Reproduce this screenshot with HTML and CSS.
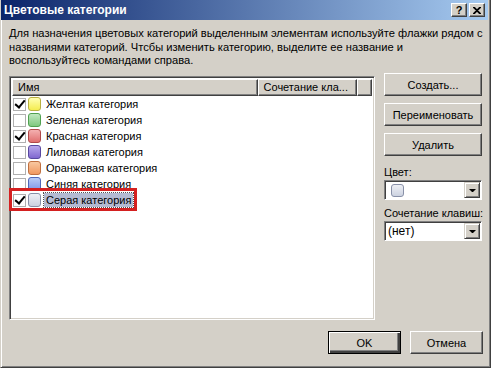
FILE: index.html
```html
<!DOCTYPE html>
<html lang="ru">
<head>
  <meta charset="UTF-8" />
  <title>Цветовые категории</title>
  <link rel="stylesheet" href="styles.css">
</head>
<body>
  <div class="window">
    <div class="titlebar">
      <span class="title">Цветовые категории</span>
      <div class="caption-btns">
        <span class="cap-btn">?</span>
        <span class="cap-btn">
          <svg width="8" height="7" viewBox="0 0 8 7"><path d="M0 0 L7 7 M1 0 L8 7 M7 0 L0 7 M8 0 L1 7" stroke="#000" stroke-width="1.2"/></svg>
        </span>
      </div>
    </div>

    <p class="desc">Для назначения цветовых категорий выделенным элементам используйте флажки рядом с<br>названиями категорий. Чтсбы изменить категорию, выделите ее название и<br>воспользуйтесь командами справа.</p>

    <div class="main">
      <div class="listbox">
        <div class="header">
          <div class="col col-name">Имя</div>
          <div class="col col-keys">Сочетание кла...</div>
          <div class="col col-fill"></div>
        </div>
        <div class="rows">
          <div class="row"><span class="check on"></span><span class="swatch yellow"></span><span class="label">Желтая категория</span></div>
          <div class="row"><span class="check"></span><span class="swatch green"></span><span class="label">Зеленая категория</span></div>
          <div class="row"><span class="check on"></span><span class="swatch red"></span><span class="label">Красная категория</span></div>
          <div class="row"><span class="check"></span><span class="swatch purple"></span><span class="label">Лиловая категория</span></div>
          <div class="row"><span class="check"></span><span class="swatch orange"></span><span class="label">Оранжевая категория</span></div>
          <div class="row"><span class="check"></span><span class="swatch blue"></span><span class="label">Синяя категория</span></div>
          <div class="row marked"><span class="check on"></span><span class="swatch gray"></span><span class="label selected">Серая категория</span><span class="red-frame"></span></div>
        </div>
      </div>

      <div class="side">
        <button class="btn">Создать...</button>
        <button class="btn">Переименовать</button>
        <button class="btn">Удалить</button>
        <div class="field-label">Цвет:</div>
        <div class="combo"><span class="swatch gray"></span><span class="drop"></span></div>
        <div class="field-label">Сочетание клавиш:</div>
        <div class="combo"><span class="combo-text">(нет)</span><span class="drop"></span></div>
      </div>
    </div>

    <div class="footer">
      <button class="btn btn-ok">OK</button>
      <button class="btn">Отмена</button>
    </div>
  </div>
</body>
</html>
```

FILE: styles.css
```css
body {
  margin: 0;
  background: #d4d0c8;
  font-family: "Liberation Sans", Arial, sans-serif;
  font-size: 11px;
  color: #000;
}
.window {
  width: 491px;
  height: 368px;
  box-sizing: border-box;
  border-left: 1px solid #d4d0c8;
  border-right: 1px solid #404040;
  border-bottom: 1px solid #404040;
  box-shadow: inset 1px 0 #fff, inset -1px -1px #808080;
  display: flex;
  flex-direction: column;
  overflow: hidden;
}
.titlebar {
  height: 20px;
  margin-left: -1px;
  margin-right: 2px;
  background: linear-gradient(to right, #0a246a, #a6caf0);
  display: flex;
  align-items: center;
  justify-content: space-between;
  padding: 0 3px 0 4px;
}
.title {
  color: #fff;
  font-weight: bold;
  font-size: 12px;
}
.caption-btns {
  display: flex;
  gap: 2px;
}
.cap-btn {
  width: 16px;
  height: 14px;
  box-sizing: border-box;
  background: #d4d0c8;
  border: 1px solid;
  border-color: #fff #404040 #404040 #fff;
  box-shadow: inset -1px -1px #808080;
  font-weight: bold;
  font-size: 11px;
  line-height: 12px;
  display: flex;
  align-items: center;
  justify-content: center;
}
.desc {
  margin: 7px 0 0 8px;
  font-size: 11.15px;
  line-height: 13.5px;
  height: 44px;
  white-space: nowrap;
}
.main {
  display: flex;
  gap: 9px;
  margin: 5px 0 0 8px;
}
.listbox {
  width: 366px;
  height: 244px;
  box-sizing: border-box;
  background: #fff;
  border: 1px solid;
  border-color: #808080 #fff #fff #808080;
  box-shadow: inset 1px 1px #404040, inset -1px -1px #d4d0c8;
  padding: 2px;
}
.header {
  display: flex;
  height: 17px;
}
.col {
  box-sizing: border-box;
  background: #d4d0c8;
  border: 1px solid;
  border-color: #fff #404040 #404040 #fff;
  box-shadow: inset -1px -1px #808080;
  padding: 0 5px;
  line-height: 14px;
  white-space: nowrap;
}
.col-name { width: 247px; }
.col-keys { width: 100px; }
.col-fill { width: 15px; }
.row {
  display: flex;
  align-items: center;
  height: 16px;
  padding-left: 1px;
}
.check {
  width: 13px;
  height: 13px;
  box-sizing: border-box;
  border: 1px solid #b0b0b0;
  background: #fff;
  margin-right: 2px;
  position: relative;
}
.check.on::after {
  content: "";
  position: absolute;
  left: 3px;
  top: -1px;
  width: 4px;
  height: 8px;
  border: solid #000;
  border-width: 0 2px 2px 0;
  transform: rotate(40deg);
}
.swatch {
  width: 13px;
  height: 14px;
  box-sizing: border-box;
  border: 1px solid #808080;
  border-radius: 3px;
  margin-right: 3px;
}
.yellow { background: linear-gradient(#ffffb0, #f4ec50); border-color: #b8b040; }
.green { background: linear-gradient(#c0e8c0, #80c880); border-color: #50a050; }
.red { background: linear-gradient(#f4b0b0, #e07070); border-color: #b04848; }
.purple { background: linear-gradient(#b8a8ec, #8068d0); border-color: #5848a0; }
.orange { background: linear-gradient(#f8c8a0, #f09860); border-color: #c07040; }
.blue { background: linear-gradient(#b8ccf8, #8098e8); border-color: #5068b8; }
.gray { background: linear-gradient(#eef0f6, #ccd2e0); border-color: #8890a8; }
.label {
  padding: 0 2px;
  font-size: 11px;
  line-height: 14px;
  white-space: nowrap;
}
.selected {
  background: #b4bad2;
  outline: 1px dotted #505050;
}
.marked {
  position: relative;
}
.red-frame {
  position: absolute;
  left: -3px;
  top: -4px;
  width: 128px;
  height: 23px;
  border: 3px solid #d42020;
  box-sizing: border-box;
}
.side {
  width: 98px;
  display: flex;
  flex-direction: column;
  margin-top: -3px;
}
.btn {
  font-family: inherit;
  font-size: 11px;
  height: 23px;
  box-sizing: border-box;
  background: #d4d0c8;
  border: 1px solid;
  border-color: #fff #404040 #404040 #fff;
  box-shadow: inset -1px -1px #808080;
  padding: 0;
  color: #000;
  margin-bottom: 7px;
}
.field-label {
  margin-top: 3px;
  height: 14px;
  white-space: nowrap;
}
.combo {
  height: 20px;
  box-sizing: border-box;
  background: #fff;
  border: 1px solid;
  border-color: #808080 #fff #fff #808080;
  box-shadow: inset 1px 1px #404040;
  display: flex;
  align-items: center;
  justify-content: space-between;
  padding: 1px 1px 1px 6px;
  margin: 0 0 4px;
}
.combo .swatch {
  width: 13px;
  height: 13px;
}
.combo-text {
  margin-left: -3px;
  font-size: 12px;
}
.drop {
  width: 16px;
  height: 16px;
  box-sizing: border-box;
  background: #d4d0c8;
  border: 1px solid;
  border-color: #d4d0c8 #404040 #404040 #d4d0c8;
  box-shadow: inset 1px 1px #fff, inset -1px -1px #808080;
  position: relative;
}
.drop::after {
  content: "";
  position: absolute;
  left: 4px;
  top: 6px;
  border-left: 3px solid transparent;
  border-right: 3px solid transparent;
  border-top: 3px solid #000;
  width: 1px;
}
.footer {
  display: flex;
  justify-content: flex-end;
  gap: 9px;
  margin-top: 11px;
  padding-right: 7px;
}
.footer .btn {
  width: 73px;
  margin: 0;
}
.btn-ok {
  border-color: #000;
  box-shadow: inset 1px 1px #fff, inset -2px -2px #404040, inset -3px -3px #808080;
}
```
